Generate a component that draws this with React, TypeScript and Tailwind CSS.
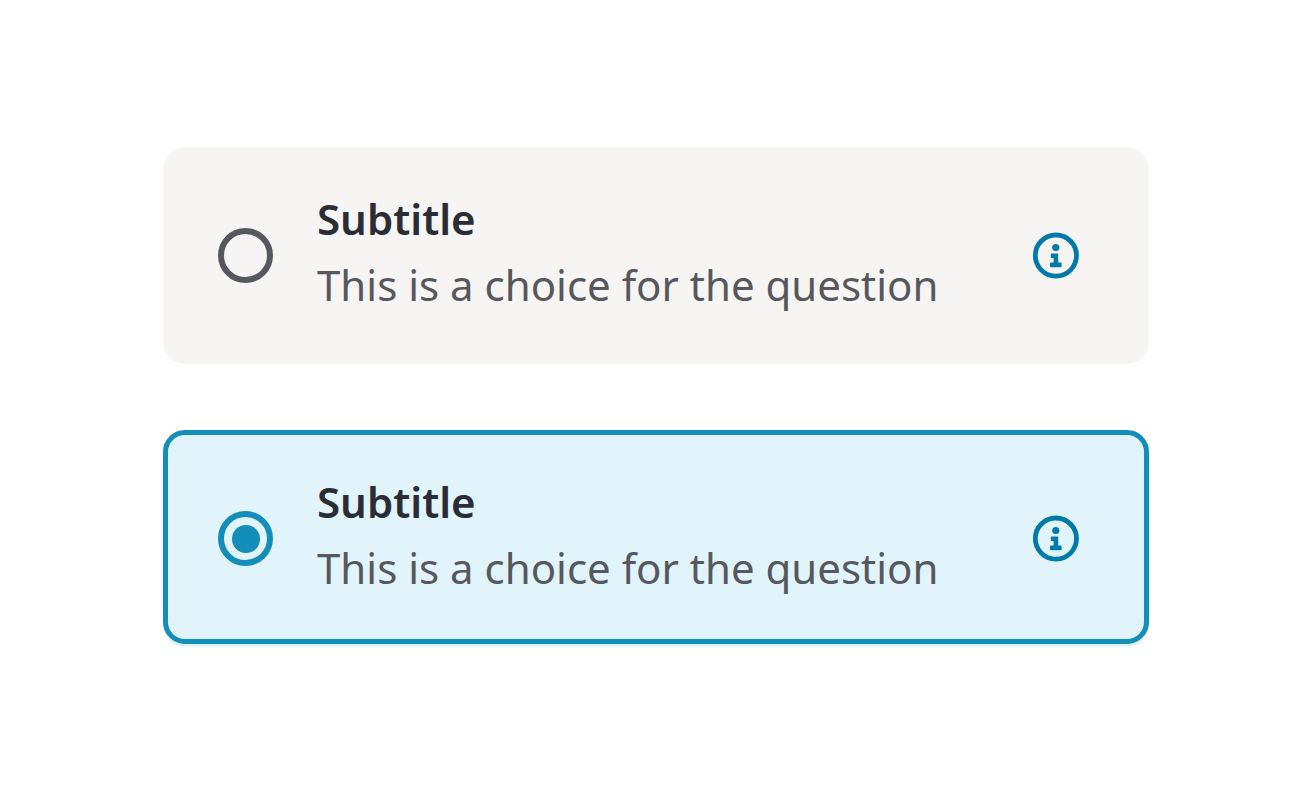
import { useState } from "react";

const choices = [
  { id: "first", title: "Subtitle", text: "This is a choice for the question" },
  { id: "second", title: "Subtitle", text: "This is a choice for the question" },
];

function InfoIcon() {
  return (
    <svg viewBox="0 0 46 46" className="size-[46px] overflow-visible" fill="none" aria-hidden="true">
      <circle cx="22.9" cy="22.6" r="20.6" stroke="currentColor" strokeWidth="4.8" />
      <circle cx="22.8" cy="14.5" r="3.6" fill="currentColor" />
      <path
        d="M18.4 20.4H24.4Q25.2 20.4 25.2 21.2V29.5H27.8Q28.6 29.5 28.6 30.3V33.4Q28.6 34.2 27.8 34.2H17.8Q17 34.2 17 33.4V30.3Q17 29.5 17.8 29.5H20.6V24.9H18.4Q17.8 24.9 17.8 24.2V21.2Q17.8 20.4 18.4 20.4Z"
        fill="currentColor"
      />
    </svg>
  );
}

export default function App() {
  const [selected, setSelected] = useState("second");

  return (
    <main className="min-h-screen bg-white px-6 pt-[147px] pb-12 font-['Noto_Sans','Open_Sans',sans-serif]">
      <div
        role="radiogroup"
        aria-label="Choices"
        className="mx-auto flex w-full max-w-[986px] flex-col gap-[66px]"
      >
        {choices.map((choice) => {
          const active = choice.id === selected;
          return (
            <div
              key={choice.id}
              className={`rounded-[22px] pb-[3px] ${active ? "bg-[#e1f4fc]" : "bg-[#f6f5f4]"}`}
            >
              <div
                className={`flex items-center rounded-[22px] border-[5px] pt-[34px] pr-[65px] pb-[31px] pl-[50px] ${
                  active ? "border-[#138db9]" : "border-transparent"
                }`}
              >
                <input
                  type="radio"
                  id={choice.id}
                  name="choice"
                  checked={active}
                  onChange={() => setSelected(choice.id)}
                  className="grid size-[55px] shrink-0 appearance-none place-items-center rounded-full border-[6px] border-[#56585d] before:size-7 before:rounded-full checked:border-[#138db9] checked:before:bg-[#138db9]"
                />
                <label htmlFor={choice.id} className="flex-1 pb-[7px] pl-11 text-[42px] leading-[66px]">
                  <span className="block font-semibold text-[#2a2d35]">{choice.title}</span>
                  <span className="block text-[#56585d]">{choice.text}</span>
                </label>
                <button type="button" aria-label="More information" className="shrink-0 text-[#007aa8]">
                  <InfoIcon />
                </button>
              </div>
            </div>
          );
        })}
      </div>
    </main>
  );
}
